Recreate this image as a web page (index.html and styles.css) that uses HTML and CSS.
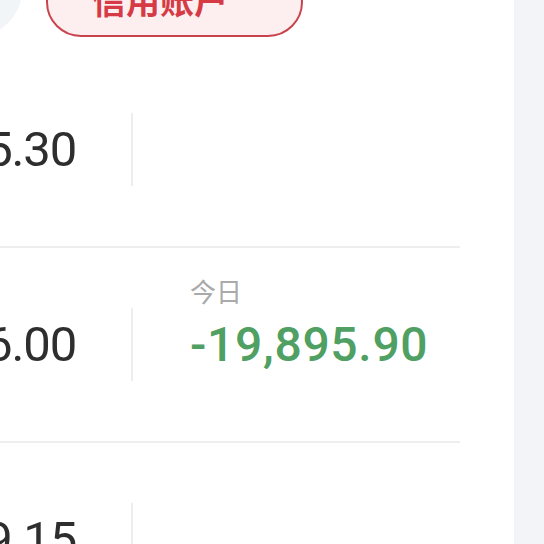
FILE: index.html
```html
<!DOCTYPE html>
<html lang="zh-CN">
<head>
<meta charset="utf-8">
<title>账户</title>
<link rel="stylesheet" href="styles.css">
</head>
<body>
<div class="screen">
  <main class="panel">
    <header class="header">
      <div class="avatar"></div>
      <div class="pill">信用账户</div>
    </header>
    <section class="row">
      <div class="cell-left"><span class="num">128,415.30</span></div>
      <div class="cell-right"></div>
    </section>
    <section class="row">
      <div class="cell-left"><span class="num">96,206.00</span></div>
      <div class="cell-right">
        <span class="label">今日</span>
        <span class="value down">-19,895.90</span>
      </div>
    </section>
    <section class="row">
      <div class="cell-left"><span class="num">32,209.15</span></div>
      <div class="cell-right"></div>
    </section>
  </main>
  <aside class="side"></aside>
</div>
</body>
</html>
```

FILE: styles.css
```css
html, body {
  margin: 0;
  padding: 0;
  background: #ffffff;
  overflow: hidden;
}

.screen {
  display: flex;
  width: 544px;
  height: 544px;
  overflow: hidden;
  font-family: Roboto, "Noto Sans CJK SC", sans-serif;
}

.panel {
  width: 514px;
  flex: none;
  background: #ffffff;
}

.side {
  flex: 1;
  background: #f3f4f8;
}

.header {
  display: flex;
  align-items: flex-start;
  margin: -56px 0 16px -70px;
}

.avatar {
  width: 92px;
  height: 92px;
  border-radius: 50%;
  background: #f2f5f8;
  flex: none;
}

.pill {
  margin: 23px 0 0 24px;
  box-sizing: border-box;
  width: 257px;
  height: 70px;
  border-radius: 35px;
  border: 2px solid #c9434c;
  background: #fdeef0;
  color: #d63a45;
  font-family: "Noto Sans CJK SC", sans-serif;
  font-weight: 700;
  font-size: 34px;
  line-height: 1;
  display: flex;
  align-items: center;
  padding: 0 0 5px 44px;
}

.row {
  width: 460px;
  display: flex;
  align-items: center;
  padding: 60px 0;
  border-bottom: 2px solid #eeeeee;
}

.cell-left {
  box-sizing: border-box;
  width: 133px;
  height: 73px;
  flex: none;
  border-right: 2px solid #ededed;
  display: flex;
  align-items: center;
  justify-content: flex-end;
  padding-right: 55px;
  white-space: nowrap;
}

.num {
  font-size: 49px;
  line-height: 50px;
  letter-spacing: -1.2px;
  color: #2e2e2e;
}

.cell-right {
  display: flex;
  flex-direction: column;
  padding-left: 57px;
  margin-top: -42px;
}

.label {
  font-family: "Noto Sans CJK SC", sans-serif;
  font-size: 26px;
  line-height: 26px;
  color: #aaaaaa;
  margin-bottom: 16px;
}

.value {
  font-size: 48px;
  font-weight: 500;
  line-height: 50px;
  letter-spacing: 0.7px;
  white-space: nowrap;
}

.down {
  color: #4fa062;
}
```
